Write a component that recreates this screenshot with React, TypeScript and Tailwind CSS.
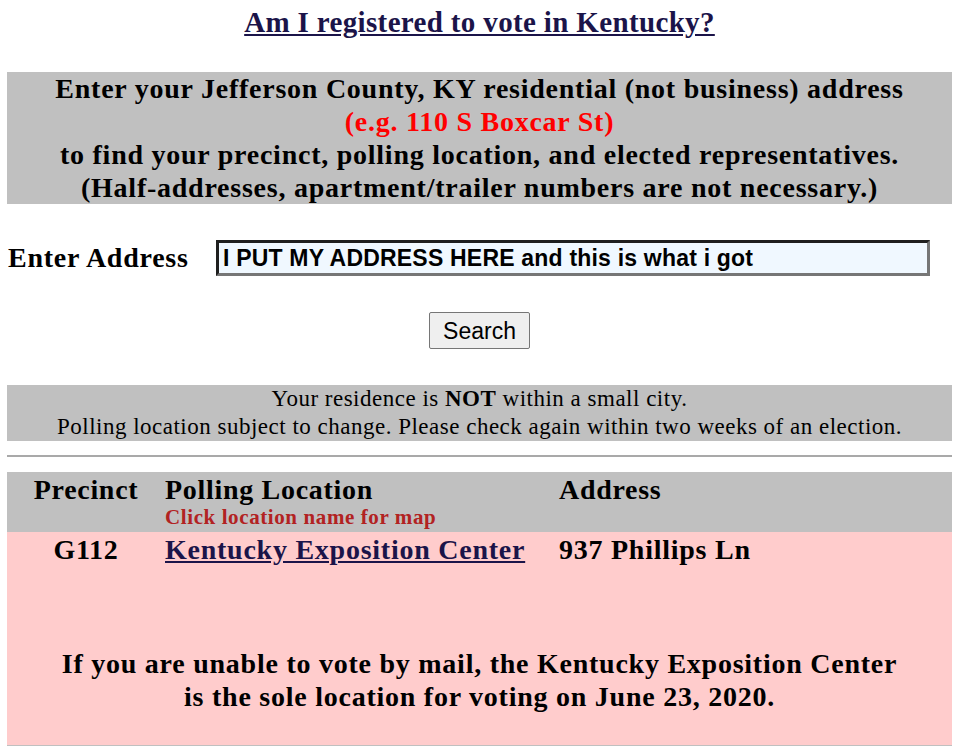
export default function App() {
  const serif = { fontFamily: '"Liberation Serif", "DejaVu Serif", serif' };
  const sans = { fontFamily: '"Liberation Sans", Arial, sans-serif' };

  return (
    <div className="min-h-[747px] bg-white pl-[7px] pr-[2px] pt-[6px] text-black" style={serif}>
      <div className="text-center text-[29px] font-bold leading-[32px] tracking-[0.35px]">
        <a href="#" className="text-[#1b1449] underline">
          Am I registered to vote in Kentucky?
        </a>
      </div>

      {/* instructions */}
      <div className="mt-[34px] bg-[#c0c0c0] text-center text-[28px] font-bold leading-[33px] tracking-[0.75px]">
        <div>Enter your Jefferson County, KY residential (not business) address</div>
        <div className="text-[#ff0000]">(e.g. 110 S Boxcar St)</div>
        <div>to find your precinct, polling location, and elected representatives.</div>
        <div>(Half-addresses, apartment/trailer numbers are not necessary.)</div>
      </div>

      {/* address form */}
      <div className="mt-[36px] flex h-[36px] items-center">
        <label className="w-[209px] pl-[1px] text-[28px] font-bold leading-[36px] tracking-[0.75px]">
          Enter Address
        </label>
        <input
          type="text"
          readOnly
          value="I PUT MY ADDRESS HERE and this is what i got"
          className="h-[36px] w-[714px] border-[3px] border-t-[#1f1f1f] border-l-[#1f1f1f] border-b-[#767676] border-r-[#767676] bg-[#f0f8ff] px-[4px] text-[23px] font-bold leading-[28px] tracking-[0.2px] text-black outline-none"
          style={sans}
        />
      </div>

      <div className="mt-[36px] flex h-[37px] justify-center">
        <button
          className="h-[37px] w-[101px] rounded-[2px] border border-[#767676] bg-[#efefef] text-[23px] leading-[28px] text-black"
          style={sans}
        >
          Search
        </button>
      </div>

      {/* status */}
      <div className="mt-[36px] bg-[#c0c0c0] text-center text-[23px] leading-[28px] tracking-[0.5px]">
        <div>
          Your residence is <b>NOT</b> within a small city.
        </div>
        <div>Polling location subject to change. Please check again within two weeks of an election.</div>
      </div>

      <hr className="mt-[14px] border-t-2 border-[#a9a9a9]" />

      {/* results */}
      <div className="mt-[15px]">
        <div className="grid grid-cols-[158px_394px_1fr] bg-[#c0c0c0] pt-[3px] pb-[3px] tracking-[0.7px]">
          <div className="text-center text-[28px] font-bold leading-[30px]">Precinct</div>
          <div>
            <div className="text-[28px] font-bold leading-[30px]">Polling Location</div>
            <div className="text-[21px] font-bold leading-[24px] tracking-[0.6px] text-[#b22222]">
              Click location name for map
            </div>
          </div>
          <div className="text-[28px] font-bold leading-[30px]">Address</div>
        </div>
        <div className="h-[214px] border-b border-[#c0c0c0] bg-[#ffcccc] pt-[3px]">
          <div className="grid grid-cols-[158px_394px_1fr] text-[28px] font-bold leading-[30px] tracking-[0.75px]">
            <div className="text-center">G112</div>
            <div>
              <a href="#" className="text-[#1b1449] underline">
                Kentucky Exposition Center
              </a>
            </div>
            <div>937 Phillips Ln</div>
          </div>
          <div className="mt-[82px] text-center text-[28px] font-bold leading-[33px] tracking-[0.75px]">
            <div>If you are unable to vote by mail, the Kentucky Exposition Center</div>
            <div>is the sole location for voting on June 23, 2020.</div>
          </div>
        </div>
      </div>
    </div>
  );
}
